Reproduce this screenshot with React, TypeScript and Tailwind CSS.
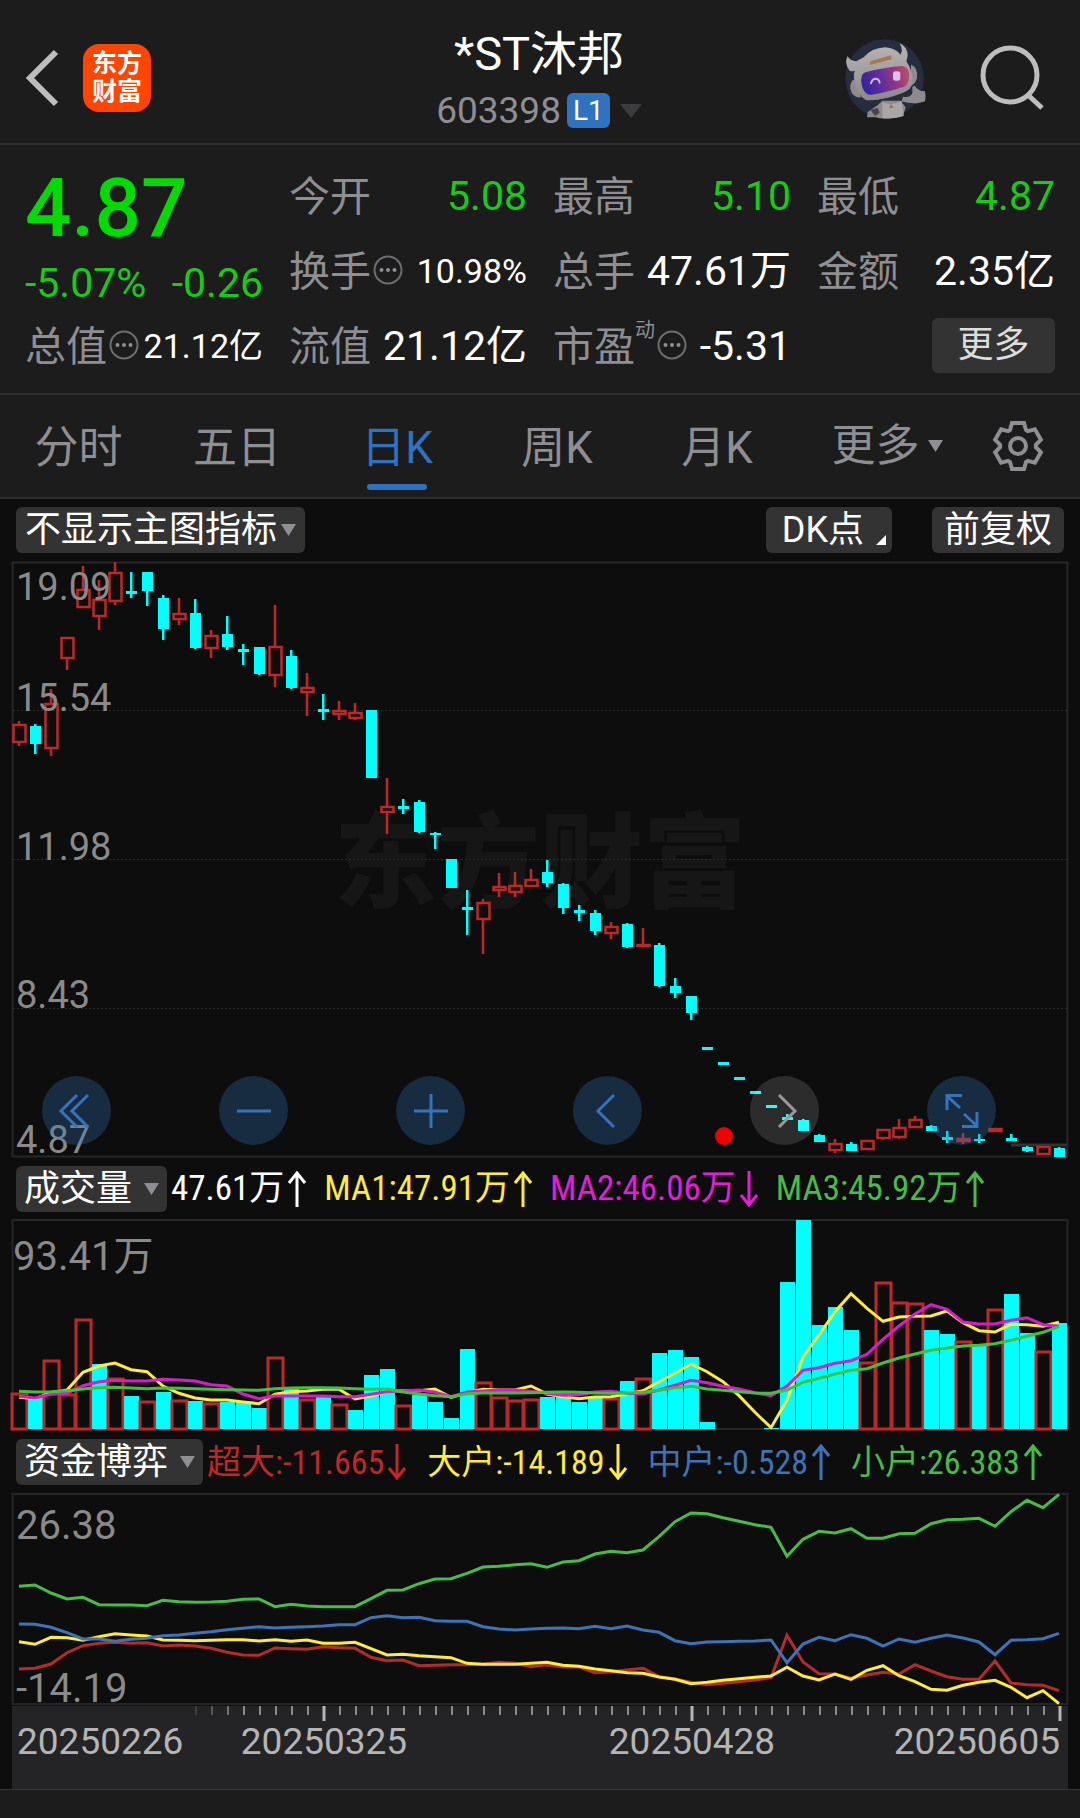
import { Fragment } from "react";
import clsx from "clsx";

const STEP = 16;
const FIRST_X = 19;

const xAt = (index: number) => FIRST_X + index * STEP;

const UP = "#c02828";
const DOWN = "#00ffff";

// [rising, high, body top, body bottom, low]
type Candle = [number, number, number, number, number];

const candles: Candle[] = [
  [1, 721, 725, 742, 746], [0, 724, 726, 744, 754], [1, 689, 704, 748, 756], [1, 637, 638, 658, 670],
  [1, 566, 590, 607, 607], [1, 580, 600, 616, 630], [1, 562, 573, 601, 605], [0, 572, 591, 594, 598],
  [0, 572, 572, 591, 606], [0, 595, 598, 629, 640], [1, 598, 614, 619, 625], [0, 599, 613, 648, 649],
  [1, 630, 636, 648, 658], [0, 616, 634, 647, 650], [0, 644, 649, 652, 665], [0, 647, 647, 674, 675],
  [1, 605, 647, 675, 687], [0, 650, 656, 688, 689], [1, 673, 688, 692, 716], [0, 694, 709, 712, 720],
  [1, 701, 711, 714, 720], [1, 703, 713, 718, 720], [0, 710, 710, 778, 778], [1, 778, 807, 812, 834],
  [0, 799, 806, 809, 814], [0, 800, 802, 832, 833], [0, 832, 833, 835, 849], [0, 859, 859, 888, 888],
  [0, 890, 907, 910, 935], [1, 899, 903, 919, 954], [1, 873, 887, 890, 897], [1, 872, 886, 892, 897],
  [1, 869, 880, 886, 886], [0, 860, 872, 883, 887], [0, 883, 884, 908, 914], [0, 905, 910, 913, 921],
  [0, 910, 913, 931, 935], [1, 922, 927, 933, 939], [0, 923, 924, 947, 948], [1, 928, 945, 946, 947],
  [0, 943, 945, 986, 987], [0, 978, 986, 993, 998], [0, 996, 996, 1013, 1020], [0, 1047, 1047, 1050, 1050],
  [0, 1062, 1062, 1065, 1065], [0, 1077, 1077, 1080, 1080], [0, 1091, 1091, 1094, 1094], [0, 1105, 1105, 1108, 1108],
  [0, 1114, 1117, 1120, 1120], [0, 1119, 1120, 1131, 1131], [0, 1134, 1135, 1142, 1142], [1, 1139, 1144, 1150, 1153],
  [0, 1142, 1144, 1151, 1151], [1, 1141, 1141, 1149, 1149], [1, 1130, 1130, 1138, 1140], [1, 1119, 1128, 1137, 1139],
  [1, 1116, 1120, 1127, 1127], [0, 1125, 1126, 1131, 1131], [0, 1131, 1137, 1140, 1143], [1, 1133, 1139, 1141, 1144],
  [0, 1134, 1139, 1141, 1143], [1, 1129, 1129, 1131, 1131], [0, 1134, 1138, 1141, 1141], [0, 1146, 1147, 1151, 1152],
  [1, 1146, 1147, 1154, 1154], [0, 1147, 1148, 1157, 1157],
];

// [rising, bar top]
const volumes: [number, number][] = [
  [1, 1394], [0, 1397], [1, 1361], [1, 1395], [1, 1320], [0, 1364], [1, 1379], [0, 1396], [1, 1402], [0, 1392], [1, 1401],
  [0, 1401], [1, 1404], [0, 1402], [0, 1402], [0, 1408], [1, 1358], [0, 1387], [1, 1400], [0, 1396], [1, 1405], [0, 1410],
  [0, 1375], [0, 1369], [1, 1406], [0, 1395], [0, 1402], [0, 1418], [0, 1349], [1, 1383], [1, 1398], [1, 1401], [1, 1400],
  [0, 1397], [0, 1395], [0, 1402], [0, 1397], [1, 1399], [0, 1381], [1, 1379], [0, 1353], [0, 1350], [0, 1357], [0, 1422],
  [0, 1429], [0, 1429], [0, 1429], [0, 1428], [0, 1282], [0, 1220], [0, 1325], [0, 1307], [0, 1330], [1, 1363], [1, 1283],
  [1, 1303], [1, 1304], [0, 1330], [0, 1334], [1, 1342], [0, 1344], [1, 1310], [0, 1294], [0, 1333], [1, 1352], [0, 1323],
];

type Series = { color: string; values: number[] };

const averages: Series[] = [
  {
    color: "#ffeb3b",
    values: [
      592, 596, 578, 570, 517, 498, 489, 509, 515, 558, 580, 594, 600, 600, 606, 611, 583, 575, 573, 568, 568, 597,
      588, 575, 572, 572, 567, 592, 578, 568, 570, 570, 558, 582, 590, 596, 591, 590, 582, 572, 545, 519, 492, 515,
      545, 587, 637, 683, 600, 470, 405, 335, 281, 325, 364, 351, 349, 348, 333, 368, 392, 396, 373, 374, 379, 367,
    ],
  },
  {
    color: "#d81bd0",
    values: [
      589, 594, 583, 580, 557, 545, 541, 543, 543, 538, 540, 543, 554, 558, 582, 596, 588, 588, 588, 588, 590, 590,
      583, 575, 573, 570, 577, 590, 576, 573, 570, 570, 574, 580, 586, 584, 576, 574, 580, 582, 570, 556, 541, 548,
      559, 567, 578, 587, 558, 511, 503, 490, 482, 463, 418, 378, 342, 314, 328, 366, 372, 372, 361, 353, 374, 379,
    ],
  },
  {
    color: "#3fc13f",
    values: [
      574, 576, 575, 572, 567, 563, 562, 564, 566, 564, 565, 566, 568, 569, 570, 571, 566, 564, 563, 563, 564, 566,
      568, 566, 576, 582, 587, 590, 581, 579, 579, 579, 578, 577, 576, 577, 579, 580, 579, 577, 571, 563, 559, 567,
      571, 575, 579, 580, 570, 547, 535, 522, 511, 506, 489, 474, 462, 451, 444, 438, 436, 431, 421, 409, 397, 380,
    ],
  },
];

const flows: Series[] = [
  {
    color: "#b52a2a",
    values: [
      717, 715, 702, 668, 647, 640, 637, 640, 638, 648, 645, 648, 655, 667, 675, 676, 654, 656, 658, 650, 653, 655,
      682, 692, 690, 707, 706, 704, 704, 703, 697, 700, 710, 704, 711, 711, 728, 726, 720, 715, 740, 747, 757, 764,
      760, 755, 750, 743, 616, 696, 731, 732, 745, 735, 727, 732, 704, 723, 740, 748, 748, 693, 759, 764, 766, 782,
    ],
  },
  {
    color: "#ffeb3b",
    values: [
      635, 643, 622, 623, 631, 620, 611, 615, 618, 630, 631, 632, 631, 629, 629, 633, 629, 634, 630, 640, 640, 637,
      656, 675, 673, 677, 680, 683, 700, 703, 703, 703, 700, 697, 706, 709, 717, 722, 728, 730, 741, 748, 761, 757,
      751, 746, 742, 738, 712, 738, 750, 732, 748, 721, 707, 737, 755, 778, 781, 766, 757, 751, 772, 803, 782, 821,
    ],
  },
  {
    color: "#3d74b8",
    values: [
      582, 583, 592, 608, 627, 627, 634, 628, 625, 617, 615, 610, 605, 599, 595, 590, 594, 592, 590, 588, 584, 584,
      563, 557, 563, 562, 572, 574, 574, 590, 597, 600, 597, 595, 594, 596, 589, 596, 588, 600, 607, 632, 641, 636,
      635, 634, 633, 630, 698, 642, 622, 632, 614, 625, 648, 627, 637, 625, 615, 624, 636, 674, 631, 629, 626, 610,
    ],
  },
  {
    color: "#46bd46",
    values: [
      469, 465, 489, 507, 502, 524, 525, 525, 527, 511, 515, 517, 516, 514, 508, 507, 530, 523, 528, 530, 530, 530,
      506, 481, 480, 461, 447, 446, 430, 411, 409, 404, 401, 412, 396, 392, 372, 364, 368, 360, 320, 275, 249, 251,
      263, 274, 284, 292, 379, 328, 304, 309, 296, 325, 325, 311, 310, 281, 269, 268, 265, 289, 245, 211, 233, 193,
    ],
  },
];

// series values are thirds of a unit, counted from the given offset
const toPoints = (values: number[], offset: number) =>
  values.map((value, index) => `${xAt(index)},${(offset + value / 3).toFixed(1)}`).join(" ");

const Lines = ({ series, offset }: { series: Series[]; offset: number }) => (
  <>
    {series.map((line, index) => (
      <polyline key={index} points={toPoints(line.values, offset)} fill="none" stroke={line.color} strokeWidth="3" />
    ))}
  </>
);

const AxisLabel = ({ y, children, x = 16, size = 40 }: { y: number; children: string; x?: number; size?: number }) => (
  <text x={x} y={y} fontSize={size} fill="#8a8a8a">
    {children}
  </text>
);

const Dots = () => (
  <svg viewBox="0 0 30 30" className="mb-1 ml-[2px] size-[30px] shrink-0" aria-hidden="true">
    <circle cx="15" cy="15" r="13.5" fill="none" stroke="#6e6e72" strokeWidth="2" />
    {[8.5, 15, 21.5].map((cx) => (
      <circle key={cx} cx={cx} cy="15" r="2" fill="#8e8e93" />
    ))}
  </svg>
);

const Caret = ({ className }: { className: string }) => (
  <svg viewBox="0 0 14 12" preserveAspectRatio="none" className={clsx("shrink-0", className)} aria-hidden="true">
    <path d="M0 0H14L7 12Z" fill="currentColor" />
  </svg>
);

const Arrow = ({ up }: { up: boolean }) => (
  <svg viewBox="0 0 18 36" className="ml-1 h-9 w-[18px] shrink-0" fill="none" stroke="currentColor" strokeWidth="3" aria-hidden="true">
    <path d={up ? "M9 36V2M1 12L9 2L17 12" : "M9 0V34M1 24L9 34L17 24"} />
  </svg>
);

const GEAR_TOOTH = [[-8, -16], [-6, -23], [6, -23], [8, -16]];

const gearPoints = Array.from({ length: 6 }, (_, tooth) => {
  const angle = (tooth * Math.PI) / 3;
  return GEAR_TOOTH.map(
    ([x, y]) =>
      `${(x * Math.cos(angle) - y * Math.sin(angle)).toFixed(1)},${(x * Math.sin(angle) + y * Math.cos(angle)).toFixed(1)}`
  ).join(" ");
}).join(" ");

const Gear = () => (
  <svg viewBox="-26 -26 52 52" className="size-[52px]" fill="none" stroke="#8e8e93" strokeWidth="4" aria-hidden="true">
    <polygon points={gearPoints} />
    <circle r="8" />
  </svg>
);

const Robot = () => (
  <svg viewBox="0 0 312 300" className="h-[100px] w-[104px]" aria-hidden="true">
    <defs>
      <linearGradient id="visor" x1="0" y1="0.6" x2="1" y2="0.4">
        <stop offset="0" stopColor="#33229a" />
        <stop offset="0.45" stopColor="#65309a" />
        <stop offset="0.8" stopColor="#a33a78" />
        <stop offset="1" stopColor="#b5506a" />
      </linearGradient>
      <linearGradient id="shell" x1="0" y1="0" x2="0" y2="1">
        <stop offset="0" stopColor="#b9b5b5" />
        <stop offset="1" stopColor="#8d898b" />
      </linearGradient>
    </defs>
    <circle cx="149" cy="146" r="118" fill="#262d3e" />
    <path d="M96 262L98 246L128 226L142 212H196L212 232L204 258Q150 272 122 262Z" fill="#8e8a8b" />
    <path d="M142 216Q172 230 200 212L206 258Q176 268 142 264Z" fill="#aaa6a6" />
    <path d="M106 240L128 234L134 248L120 258Z" fill="#4a4547" />
    <path d="M162 234L168 222L176 234Z" fill="#a8704a" />
    <path d="M204 200Q226 204 232 190V172Q238 162 244 174L256 182L270 184Q274 200 270 214Q250 222 236 220Q214 218 200 214Z" fill="#8f8b8c" />
    <path d="M62 148Q44 152 46 176Q52 204 78 202Z" fill="#8f8b8c" />
    <path d="M228 104Q250 112 246 144Q242 160 228 168Z" fill="#8f8b8c" />
    <path d="M44 122Q26 100 38 78Q44 92 64 94L86 82Q110 54 150 52Q182 54 196 74Q206 62 194 40Q218 50 218 78L214 94Q234 122 232 158Q230 178 204 188Q140 214 92 210Q66 196 58 150Q54 134 60 122Q52 126 44 122Z" fill="url(#shell)" />
    <path d="M106 94L168 76L170 88L104 105Z" fill="#a87850" />
    <path d="M80 140Q82 130 94 126Q150 112 200 108Q222 108 223 134Q222 160 208 170Q150 188 110 194Q92 196 84 176Q76 156 80 140Z" fill="url(#visor)" />
    <path d="M108 160Q112 146 122 146Q132 146 134 158" fill="none" stroke="#c9b8e8" strokeWidth="6" strokeLinecap="round" />
    <rect x="174" y="124" width="22" height="28" rx="8" fill="#d8c4e4" />
  </svg>
);

const Header = () => (
  <header className="grid h-[145px] grid-cols-[1fr_auto_1fr] items-center border-b-2 border-[#2d2d2e] pr-[33px] pl-[23px]">
    <div className="flex items-center gap-6 pt-3">
      <button aria-label="返回">
        <svg viewBox="0 0 36 60" className="h-[60px] w-9" fill="none" stroke="#bdbdbd" strokeWidth="6" aria-hidden="true">
          <path d="M33 4L7 30L33 56" />
        </svg>
      </button>
      <a
        href="#home"
        className="flex size-[68px] flex-col items-center justify-center rounded-2xl bg-[#ff4500] text-[25px] leading-7 font-bold"
      >
        <span>东方</span>
        <span>财富</span>
      </a>
    </div>
    <div className="flex flex-col items-center pt-[18px] pl-2">
      <h1 className="text-[47px] leading-[60px]">*ST沐邦</h1>
      <button className="flex items-center gap-[6px] text-[37px] leading-[54px] text-[#8e8e93]">
        603398
        <span className="rounded-md bg-[#2f72c0] px-[6px] text-[28px] leading-[35px] text-white">L1</span>
        <Caret className="ml-1 h-[14px] w-[22px] text-[#3c3c3e]" />
      </button>
    </div>
    <div className="flex items-center justify-end gap-10 pt-3">
      <button aria-label="智能助手" className="pt-1">
        <Robot />
      </button>
      <button aria-label="搜索">
        <svg viewBox="0 0 68 68" className="size-[68px]" fill="none" stroke="#bdbdbd" strokeWidth="5" aria-hidden="true">
          <circle cx="31" cy="31" r="27" />
          <path d="M49 51L63 64" />
        </svg>
      </button>
    </div>
  </header>
);

type Quote = { label: string; value: string; tone?: string; small?: boolean; dots?: boolean; mark?: string };

const quotes: Quote[] = [
  { label: "今开", value: "5.08", tone: "text-[#16cc16]" },
  { label: "最高", value: "5.10", tone: "text-[#16cc16]" },
  { label: "最低", value: "4.87", tone: "text-[#16cc16]" },
  { label: "换手", value: "10.98%", small: true, dots: true },
  { label: "总手", value: "47.61万" },
  { label: "金额", value: "2.35亿" },
  { label: "总值", value: "21.12亿", small: true, dots: true },
  { label: "流值", value: "21.12亿" },
  { label: "市盈", value: "-5.31", dots: true, mark: "动" },
];

const QuoteItem = ({ label, value, tone = "text-white", small, dots, mark }: Quote) => (
  <div className="flex h-[75px] items-center whitespace-nowrap">
    <span className="flex items-center text-[41px] leading-[50px] text-[#8e8e93]">
      {label}
      {mark && <sup className="top-0 self-start text-[20px] leading-4">{mark}</sup>}
      {dots && <Dots />}
    </span>
    <span className={clsx("ml-auto", small ? "text-[34px]" : "text-[41px]", tone)}>{value}</span>
  </div>
);

const QuotePanel = () => (
  <section className="grid grid-cols-4 gap-x-[26px] border-b-2 border-[#2d2d2e] px-[25px] pt-[14px] pb-[9px]">
    <div className="row-span-2 text-[#00dc00]">
      <p className="text-[82px] leading-[98px] font-medium">4.87</p>
      <p className="flex justify-between text-[41px] leading-[52px] text-[#16cc16]">
        <span>-5.07%</span>
        <span>-0.26</span>
      </p>
    </div>
    {quotes.map((quote) => (
      <QuoteItem key={quote.label} {...quote} />
    ))}
    <div className="flex h-[72px] items-center justify-end">
      <button className="h-[55px] w-[123px] rounded-md bg-[#333333] text-[36px] leading-[50px] text-[#dddddd]">更多</button>
    </div>
  </section>
);

const periods = ["分时", "五日", "日K", "周K", "月K"];

const PeriodTabs = () => (
  <nav className="grid h-[104px] grid-cols-[157fr_160fr_160fr_160fr_160fr_180fr_81fr] border-b-2 border-[#2d2d2e] pr-[22px] text-[44px] text-[#8e8e93]">
    {periods.map((period) => (
      <button
        key={period}
        className={clsx("flex flex-col items-center pt-[23px] leading-[60px]", period === "日K" && "text-[#2f72c0]")}
      >
        {period}
        {period === "日K" && <span className="mt-[6px] h-[6px] w-[60px] rounded-full bg-[#2f72c0]" />}
      </button>
    ))}
    <button className="flex items-center justify-center gap-2 leading-[60px]">
      更多
      <Caret className="h-3 w-[15px]" />
    </button>
    <button aria-label="设置" className="flex items-center justify-center">
      <Gear />
    </button>
  </nav>
);

const chip = "flex h-[46px] items-center rounded-md bg-[#333333] text-[36px] leading-[46px] text-white whitespace-nowrap";

const ChartToolbar = () => (
  <div className="flex h-[61px] items-center px-4">
    <button className={clsx(chip, "gap-1 px-[9px]")}>
      不显示主图指标
      <Caret className="h-3 w-[15px] text-[#8e8e93]" />
    </button>
    <button className={clsx(chip, "ml-auto gap-3 pr-[6px] pl-4")}>
      DK点
      <svg viewBox="0 0 10 10" className="mt-5 size-[10px]" aria-hidden="true">
        <path d="M10 0V10H0Z" fill="#fff" />
      </svg>
    </button>
    <button className={clsx(chip, "ml-10 px-3")}>前复权</button>
  </div>
);

const chartActions = [
  { label: "最早", path: "M11 -16L-5 0L11 16M0 -16L-16 0L0 16" },
  { label: "缩小", path: "M-17 0H17" },
  { label: "放大", path: "M-17 0H17M0 -17V17" },
  { label: "向前", path: "M6 -16L-10 0L6 16" },
  { label: "向后", path: "M-6 -16L10 0L-6 16", disabled: true },
  { label: "全屏", path: "M-2 -3L-15 -15M-15 -1V-15.500H0M2 3L15 15M15 1V15.500H0" },
];

const PriceChart = () => (
  <div className="relative">
    <svg viewBox="0 560 1080 600" className="block w-full overflow-visible" role="img" aria-label="日K线">
      <text x="334" y="900" fontSize="103" fontWeight="900" fill="#161616">
        东方财富
      </text>
      <rect x="12.500" y="562.500" width="1055" height="594" fill="none" stroke="#262626" strokeWidth="2" />
      {[710, 859, 1008].map((y) => (
        <path key={y} d={`M13 ${y}.5H1067`} stroke="#2c2c2c" strokeDasharray="2 2" />
      ))}
      <path d="M1011 1145H1067" stroke="#333333" strokeWidth="3" />
      {candles.map(([rising, high, top, bottom, low], index) => {
        const x = xAt(index);
        return (
          <Fragment key={index}>
            {rising ? (
              <g stroke={UP} strokeWidth="2.500" fill="none">
                <path d={`M${x} ${high}V${top}M${x} ${bottom}V${low}`} />
                <rect x={x - 5.5} y={top} width="12" height={bottom - top} />
              </g>
            ) : (
              <g fill={DOWN}>
                <rect x={x - 1} y={high} width="2.500" height={low - high} />
                <rect x={x - 5} y={top} width="11" height={bottom - top} />
              </g>
            )}
          </Fragment>
        );
      })}
      <circle cx="724" cy="1136" r="9" fill="#ee0000" />
      <AxisLabel y={600} size={38}>19.09</AxisLabel>
      <AxisLabel y={711} size={38}>15.54</AxisLabel>
      <AxisLabel y={860} size={38}>11.98</AxisLabel>
      <AxisLabel y={1008} size={38}>8.43</AxisLabel>
      <AxisLabel y={1153} size={38}>4.87</AxisLabel>
    </svg>
    <div className="absolute inset-x-0 bottom-[15px] flex justify-between pr-[84px] pl-[42px]">
      {chartActions.map(({ label, path, disabled }) => (
        <button
          key={label}
          aria-label={label}
          disabled={disabled}
          className={clsx(
            "flex size-[69px] items-center justify-center rounded-full",
            disabled ? "bg-white/13 text-[#9a9a9c]" : "bg-[#2f6fb8]/30 text-[#3574bd]"
          )}
        >
          <svg viewBox="-20 -20 40 40" className="size-10" fill="none" stroke="currentColor" strokeWidth="3" aria-hidden="true">
            <path d={path} />
          </svg>
        </button>
      ))}
    </div>
  </div>
);

type Stat = { text: string; up: boolean; tone: string };

const volumeStats: Stat[] = [
  { text: "47.61万", up: true, tone: "text-white" },
  { text: "MA1:47.91万", up: true, tone: "text-[#ffeb3b]" },
  { text: "MA2:46.06万", up: false, tone: "text-[#e81bdc]" },
  { text: "MA3:45.92万", up: true, tone: "text-[#46bd46]" },
];

const flowStats: Stat[] = [
  { text: "超大:-11.665", up: false, tone: "text-[#c02828]" },
  { text: "大户:-14.189", up: false, tone: "text-[#ffeb3b]" },
  { text: "中户:-0.528", up: true, tone: "text-[#3d74b8]" },
  { text: "小户:26.383", up: true, tone: "text-[#46bd46]" },
];

const StatRow = ({ title, stats, className, listClassName }: { title: string; stats: Stat[]; className: string; listClassName: string }) => (
  <div className={clsx("flex items-center px-4", className)}>
    <button className={clsx(chip, "gap-3 px-2")}>
      {title}
      <Caret className="h-3 w-[15px] text-[#8e8e93]" />
    </button>
    <div
      className={clsx(
        "ml-1 flex font-['Roboto_Condensed','Noto_Sans_CJK_SC',sans-serif] leading-[46px] whitespace-nowrap",
        listClassName
      )}
    >
      {stats.map(({ text, up, tone }) => (
        <span key={text} className={clsx("flex items-center", tone)}>
          {text}
          <Arrow up={up} />
        </span>
      ))}
    </div>
  </div>
);

const VolumeChart = () => (
  <svg viewBox="0 1218 1080 214" className="block w-full" role="img" aria-label="成交量">
    <rect x="12.500" y="1220" width="1055" height="209" fill="none" stroke="#262626" strokeWidth="2" />
    {volumes.map(([rising, top], index) =>
      rising ? (
        <rect key={index} x={xAt(index) - 7} y={top} width="15" height={1429 - top} fill="none" stroke={UP} strokeWidth="3" />
      ) : (
        <rect key={index} x={xAt(index) - 7} y={top} width="15" height={1429 - top} fill={DOWN} />
      )
    )}
    <Lines series={averages} offset={1200} />
    <AxisLabel y={1270} x={13}>93.41万</AxisLabel>
  </svg>
);

const dates = [
  { text: "20250226", x: 17, anchor: "start" },
  { text: "20250325", x: 324, anchor: "middle" },
  { text: "20250428", x: 692, anchor: "middle" },
  { text: "20250605", x: 1060, anchor: "end" },
] as const;

const majorTicks = [19, 42, 65];

const FlowChart = () => (
  <svg viewBox="0 1492 1080 297" className="block w-full" role="img" aria-label="资金博弈">
    <rect x="12.500" y="1494" width="1055" height="210" fill="none" stroke="#262626" strokeWidth="2" />
    <rect x="12" y="1706" width="1056" height="83" fill="#242426" />
    {Array.from({ length: 55 }, (_, i) => i + 11).map((index) => {
      const major = majorTicks.includes(index);
      return (
        <path
          key={index}
          d={`M${xAt(index) + 1} 1706v${major ? 15 : 9}`}
          stroke={major ? "#b5b5b5" : "#8a8a8a"}
          strokeWidth={major ? 3 : 2}
          opacity={index < 14 ? (index - 10) / 4 : 1}
        />
      );
    })}
    <Lines series={flows} offset={1430} />
    <AxisLabel y={1539}>26.38</AxisLabel>
    <AxisLabel y={1702}>-14.19</AxisLabel>
    {dates.map(({ text, x, anchor }) => (
      <text key={text} x={x} y="1754" textAnchor={anchor} fontSize="37" fill="#b5b5b5">
        {text}
      </text>
    ))}
  </svg>
);

const App = () => (
  <div className="flex min-h-screen flex-col bg-[#1c1c1c] font-[Roboto,'Noto_Sans_CJK_SC',sans-serif] text-white">
    <Header />
    <QuotePanel />
    <PeriodTabs />
    <main className="bg-[#0d0d0d]">
      <ChartToolbar />
      <PriceChart />
      <StatRow title="成交量" stats={volumeStats} className="h-[58px]" listClassName="gap-[18px] text-[35px]" />
      <VolumeChart />
      <StatRow title="资金博弈" stats={flowStats} className="h-[60px]" listClassName="gap-[21px] text-[34px]" />
      <FlowChart />
    </main>
    <footer className="min-h-[28px] flex-1 border-t border-[#363636]" />
  </div>
);

export default App;
